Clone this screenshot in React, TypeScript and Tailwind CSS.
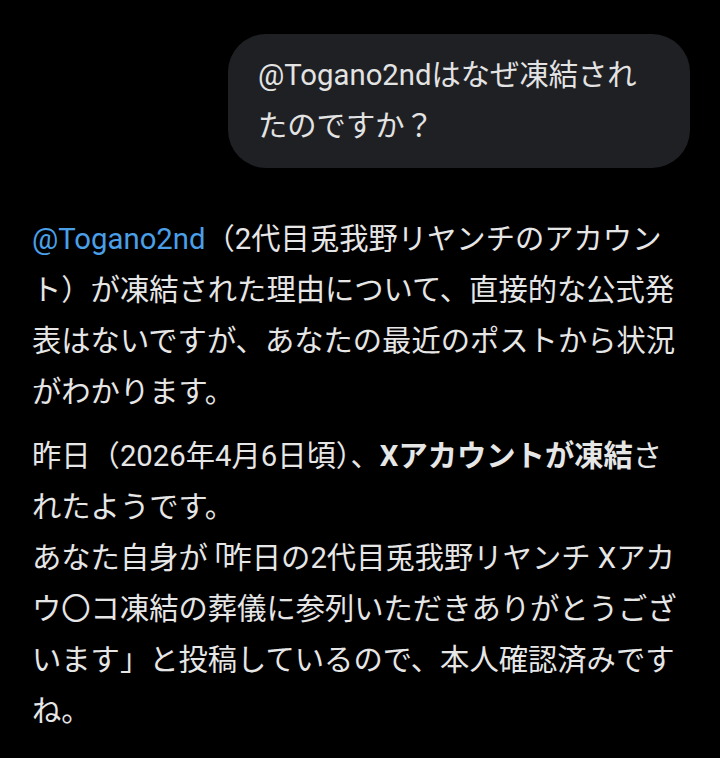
export default function App() {
  return (
    <div
      className="min-h-[758px] w-[720px] bg-black text-[29.3px] leading-[51px] text-[#e6e6e6]"
      style={{ fontFamily: 'Roboto, "Noto Sans CJK JP", sans-serif' }}
    >
      {/* user message */}
      <div className="flex justify-end pt-[34px] pr-[30px]">
        <div className="max-w-[462px] rounded-[38px] bg-[#1f2023] px-[30px] py-4 text-[#e3e3e3]">
          @Togano2ndはなぜ凍結されたのですか？
        </div>
      </div>

      {/* answer */}
      <div className="px-8 pt-[46px]">
        <p>
          <span className="text-[#4a9fe6]">@Togano2nd</span>
          （2代目兎我野リヤンチのアカウント）が凍結された理由について、直接的な公式発表はないですが、あなたの最近のポストから状況がわかります。
        </p>
        <p className="mt-[13px]">
          昨日（2026年4月6日頃）、<span className="font-bold">Xアカウントが凍結</span>されたようです。
          <br />
          あなた自身が<span className="-ml-[10px] -mr-[4.6px]">「</span>昨日の2代目兎我野リヤンチ Xアカウ〇コ凍結の葬儀に参列いただきありがとうございます」と投稿しているので、本人確認済みですね。
        </p>
      </div>
    </div>
  );
}
